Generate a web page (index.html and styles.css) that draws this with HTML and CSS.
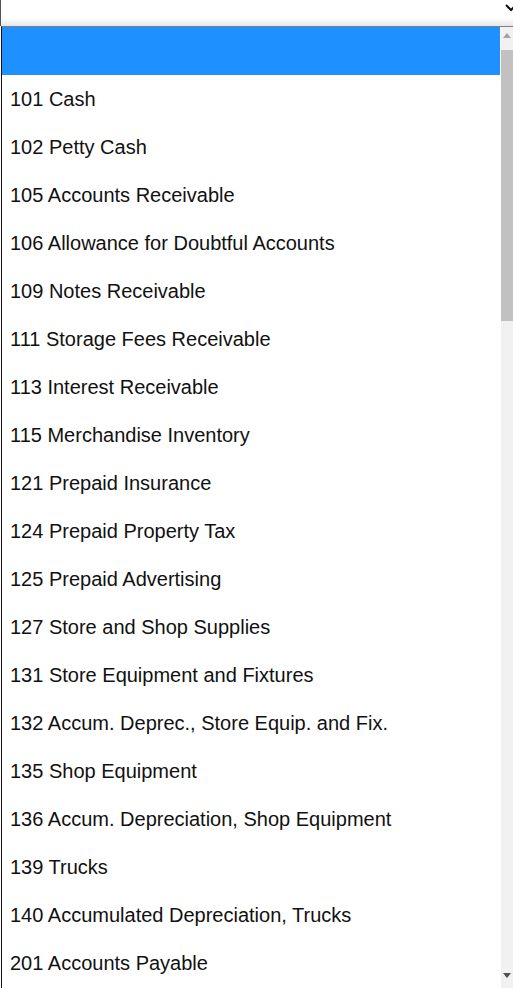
FILE: index.html
```html
<!DOCTYPE html>
<html lang="en">

<head>
    <meta charset="UTF-8">
    <meta name="viewport" content="width=device-width, initial-scale=1.0">
    <title>Account picker</title>
    <link rel="stylesheet" href="styles.css">
</head>

<body>
    <div class="select">
        <svg class="chevron" width="14" height="10" viewBox="0 0 14 10">
            <path d="M2 2 L7 7 L12 2" fill="none" stroke="#111" stroke-width="2"/>
        </svg>
    </div>
    <div class="dropdown">
        <ul class="options">
            <li class="selected">&nbsp;</li>
            <li>101 Cash</li>
            <li>102 Petty Cash</li>
            <li>105 Accounts Receivable</li>
            <li>106 Allowance for Doubtful Accounts</li>
            <li>109 Notes Receivable</li>
            <li>111 Storage Fees Receivable</li>
            <li>113 Interest Receivable</li>
            <li>115 Merchandise Inventory</li>
            <li>121 Prepaid Insurance</li>
            <li>124 Prepaid Property Tax</li>
            <li>125 Prepaid Advertising</li>
            <li>127 Store and Shop Supplies</li>
            <li>131 Store Equipment and Fixtures</li>
            <li>132 Accum. Deprec., Store Equip. and Fix.</li>
            <li>135 Shop Equipment</li>
            <li>136 Accum. Depreciation, Shop Equipment</li>
            <li>139 Trucks</li>
            <li>140 Accumulated Depreciation, Trucks</li>
            <li>201 Accounts Payable</li>
        </ul>
        <div class="scrollbar">
            <span class="arrow up"></span>
            <div class="thumb"></div>
            <span class="arrow down"></span>
        </div>
    </div>
</body>

</html>
```
FILE: styles.css
```css
* {
    margin: 0;
    padding: 0;
    box-sizing: border-box;
}

html,
body {
    height: 100%;
    overflow: hidden;
    background: #fff;
}

body {
    font-family: "Liberation Sans", Arial, sans-serif;
    color: #111;
}

.select {
    position: relative;
    height: 26px;
    border-left: 1px solid #555;
    background: linear-gradient(to bottom, #fff 0, #fff 18px, #e6e6e6 26px);
}

.chevron {
    position: absolute;
    top: 3px;
    right: -5px;
}

.dropdown {
    display: flex;
    height: 962px;
    margin-left: 1px;
    border-top: 1px solid #808080;
    border-left: 1px solid #111;
    overflow: hidden;
}

.options {
    flex: 1;
    list-style: none;
}

.options li {
    height: 48px;
    line-height: 48px;
    padding-left: 8px;
    font-size: 20px;
    white-space: nowrap;
}

.options .selected {
    background: #1e90ff;
}

.scrollbar {
    display: flex;
    flex-direction: column;
    align-items: center;
    width: 12px;
    margin-left: 1px;
    background: #f1f1f1;
}

.thumb {
    width: 12px;
    height: 271px;
    margin-top: 12px;
    background: #c1c1c1;
}

.arrow {
    width: 0;
    height: 0;
    border-left: 4px solid transparent;
    border-right: 4px solid transparent;
}

.arrow.up {
    margin-top: 6px;
    border-bottom: 5px solid #a3a3a3;
}

.arrow.down {
    margin-top: auto;
    margin-bottom: 10px;
    border-top: 5px solid #505050;
}
```
